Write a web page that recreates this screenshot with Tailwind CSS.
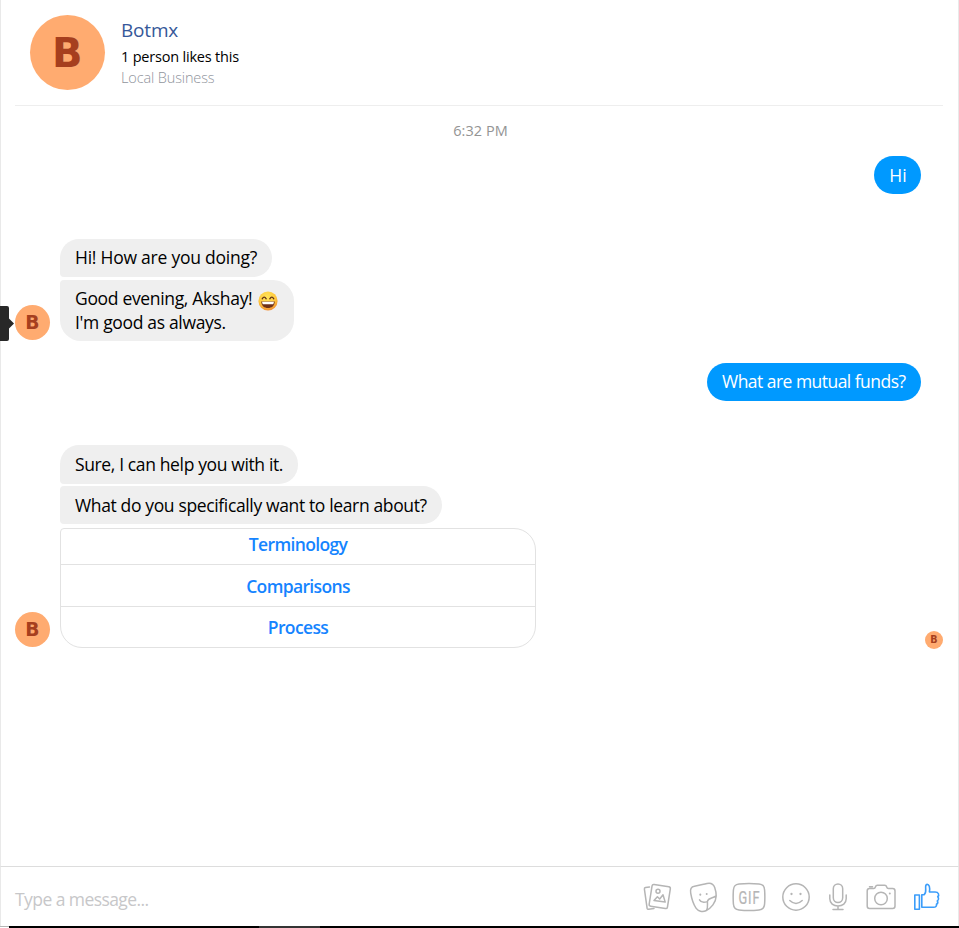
<!DOCTYPE html>
<html lang="en">
<head>
<meta charset="utf-8">
<title>Botmx</title>
<script src="https://cdn.jsdelivr.net/npm/@tailwindcss/browser@4"></script>
</head>
<body class="bg-white font-['Open_Sans',sans-serif] text-black">
<div class="relative flex h-[928px] w-[959px] flex-col overflow-hidden whitespace-nowrap">
  <main class="flex h-[866px] flex-col border-x border-[#e9e9e9] pr-[15px] pl-3.5">
    <header class="flex h-[106px] shrink-0 border-b border-[#eeeeee] pt-[15px] pl-[15px]">
      <div class="flex size-[75px] items-center justify-center rounded-full bg-[#ffab70]"><svg class="size-full" viewBox="0 0 75 75"><text x="22" y="52" textLength="30.500" lengthAdjust="spacingAndGlyphs" font-family="DejaVu Sans" font-weight="700" font-size="40.500" fill="#a63f1e">B</text></svg></div>
      <div class="ml-4 flex flex-col">
        <h1 class="mt-0.5 h-[27px] text-[19px] leading-[27px] font-[370] tracking-[-0.2px] text-[#365899]">Botmx</h1>
        <p class="h-[22px] text-[14.5px] leading-[26px] font-[370] tracking-[-0.2px]">1 person likes this</p>
        <p class="text-[14.5px] leading-[24px] font-[330] tracking-[-0.13px] text-[#90949c]">Local Business</p>
      </div>
    </header>
    <time class="mt-[14px] h-[21px] pl-[3px] text-center text-[14.5px] leading-[21px] tracking-[0.05px] text-[#949494]">6:32 PM</time>
    <section class="mt-[15px] mr-[22px] flex h-[38px] justify-end">
      <p class="h-[38px] w-[47px] rounded-full bg-[#0099ff] pl-px text-center text-[17.5px] leading-[38px] text-white">Hi</p>
    </section>
    <section class="mt-[45px] flex h-[102px] items-end">
      <div class="mb-px flex size-[35px] items-center justify-center rounded-full bg-[#ffab70]"><svg class="size-full" viewBox="0 0 75 75"><text x="22" y="52" textLength="30.500" lengthAdjust="spacingAndGlyphs" font-family="DejaVu Sans" font-weight="700" font-size="40.500" fill="#a63f1e">B</text></svg></div>
      <div class="ml-2.5 flex flex-col gap-[3px]">
        <p class="h-[38px] w-[212px] rounded-[19px] rounded-bl-[4px] bg-[#efefef] pl-[15px] text-[17.5px] leading-[37px] font-[370] tracking-[-0.24px]">Hi! How are you doing?</p>
        <div class="h-[61px] w-[234px] rounded-[21px] rounded-tl-[4px] bg-[#efefef] pt-[6px] pl-[15px] text-[17.5px] leading-6 font-[370] tracking-[-0.33px]">
          <div class="flex"><span class="w-[183px]">Good evening, Akshay!</span>
            <svg class="mt-[5px] size-5" viewBox="0 0 20 20"><defs><radialGradient id="face" cx="45%" cy="30%" r="75%"><stop stop-color="#ffe45a"/><stop offset=".6" stop-color="#ffc83d"/><stop offset="1" stop-color="#ee8130"/></radialGradient></defs><circle cx="10" cy="10" r="9.6" fill="url(#face)"/><path d="M4.2 7.8q2-3.2 4 0M11.8 7.8q2-3.2 4 0" fill="none" stroke="#603018" stroke-width="1.3" stroke-linecap="round"/><path d="M3.2 10.4h13.6c-.3 4.5-3 6.500-6.800 6.500s-6.500-2-6.800-6.500z" fill="#703018"/><path d="M4 10.700h12l-.7 2.500H4.700z" fill="#fff"/></svg></div>
          <div class="-mt-px">I'm good as always.</div>
        </div>
      </div>
    </section>
    <section class="mt-[22px] mr-[22px] flex h-[38px] justify-end">
      <p class="h-[38px] w-[214px] rounded-full bg-[#0099ff] pl-[15px] text-[17.5px] leading-[37px] font-[370] tracking-[-0.53px] text-white">What are mutual funds?</p>
    </section>
    <section class="mt-[44px] flex h-[203px] items-end">
      <div class="mb-px flex size-[35px] items-center justify-center rounded-full bg-[#ffab70]"><svg class="size-full" viewBox="0 0 75 75"><text x="22" y="52" textLength="30.500" lengthAdjust="spacingAndGlyphs" font-family="DejaVu Sans" font-weight="700" font-size="40.500" fill="#a63f1e">B</text></svg></div>
      <div class="ml-2.5 flex flex-col">
        <p class="h-[39px] w-[238px] rounded-[19px] rounded-bl-[4px] bg-[#efefef] pl-[15px] text-[17.5px] leading-[39px] font-[370] tracking-[-0.37px]">Sure, I can help you with it.</p>
        <p class="mt-0.5 h-[38px] w-[382px] rounded-r-[19px] rounded-l-[4px] bg-[#efefef] pl-[15px] text-[17.5px] leading-[38px] font-[370] tracking-[-0.36px]">What do you specifically want to learn about?</p>
        <div class="mt-1 h-[120px] w-[476px] rounded-[22px] rounded-tl-[4px] border border-[#e2e2e2] text-center text-[17.5px] font-[570] tracking-[-0.65px] text-[#1584ff]">
          <div class="h-9 border-b border-[#e2e2e2] leading-[31px]">Terminology</div>
          <div class="h-[42px] border-b border-[#e2e2e2] leading-[43px]">Comparisons</div>
          <div class="leading-[41px]">Process</div>
        </div>
      </div>
      <div class="-mb-px ml-auto flex size-[18px] items-center justify-center rounded-full bg-[#ffab70]"><svg class="size-full" viewBox="0 0 75 75"><text x="22" y="52" textLength="30.500" lengthAdjust="spacingAndGlyphs" font-family="DejaVu Sans" font-weight="700" font-size="40.500" fill="#a63f1e">B</text></svg></div>
    </section>
  </main>
  <footer class="flex h-[60px] border-x border-t border-[#dddddd] border-x-[#e9e9e9] pl-3.5">
    <div class="w-[628px] pt-[17px] text-[17.5px] leading-[30px] font-[370] tracking-[-0.57px] text-[#c7c7c9]">Type a message...</div>
    <svg class="h-[59px] w-[310px]" viewBox="643 867 310 59" fill="none" stroke="#b5b5b5" stroke-width="1.5" stroke-linecap="round" stroke-linejoin="round">
      <path d="M649.500 887l-4 .6q-1.300.3-1.100 1.600l2.700 19q.3 1.200 1.500 1l5.400-.8"/><rect x="650.500" y="885.500" width="18.500" height="22" rx="1.800" transform="rotate(9 659.750 896.500)"/><circle cx="658" cy="891.300" r="2"/><path d="M654 900.500l3.400-3.800 2.300 2.300 3.300-4.200 2.200 7.300z"/>
      <path d="M694.500 886.300c4.500-.6 8-1.900 12.500-2.900 4-.9 6.400.4 7.700 4 1 2.900 1.700 5.500 1.500 8.600-.3 6.500-5 12.300-10.300 14.700-3.400 1.500-7.800.6-9.900-2.500-2.200-3.300-4.400-9.700-5.300-15-.7-3.900.4-6.500 3.800-6.900zM716 896c-4 2.600-7.900 1.700-8.500 5.200-.4 3 .9 6.400-1.100 9.200M699.500 899.800c1.600 2.900 4.700 2.900 7.800 1.800"/><path d="M700.300 894.600v.1M706.700 893.900v.1" stroke-width="2"/>
      <path d="M739 884q10-1 20 0c4.200.5 5.300 2 5.600 6q.5 7 0 14c-.3 4-1.600 5.600-5.600 6q-10 1-20 0c-4-.4-5.300-2-5.600-6q-.5-7 0-14c.3-4 1.600-5.500 5.600-6z"/><text transform="translate(738.400 903.500) scale(.7 1)" letter-spacing="1.300" font-family="Roboto" font-size="18.300" fill="#b5b5b5" stroke="#b5b5b5" stroke-width=".25">GIF</text>
      <circle cx="796" cy="897" r="13.200"/><path d="M789.800 900.500q6.200 6 12.400 0"/><path d="M791.500 894v.1M800.500 894v.1" stroke-width="2.300"/>
      <rect x="833.300" y="884" width="9.400" height="18.500" rx="4.700"/><path d="M829.800 895v3.800c0 4.500 3.600 7.300 8.200 7.300s8.200-2.800 8.200-7.300V895M838 906.100v3.500M833 909.600h10"/>
      <path d="M869.500 888.500h4.200q1.300 0 1.700-1.500.5-1.700 2-1.700h7.300q1.500 0 2 1.700.4 1.500 1.700 1.500h4.300q2.300 0 2.300 2.500v15q0 2.500-2.300 2.500h-23.200q-2.300 0-2.300-2.500v-15q0-2.500 2.300-2.500zM869.500 886.700h3"/><circle cx="881" cy="898.500" r="6.300"/><path d="M889.800 893.500v.1" stroke-width="2"/>
      <g stroke="#3b9dfa" stroke-width="1.600"><rect x="914.800" y="895" width="4.600" height="14.200"/><path d="M921.800 907.300v-12.500h2.200c1.600-1.300 1.900-3.700 1.700-5.800-.2-2.600-.1-4.600 1.400-4.600 2 0 3.100 2.700 2.300 7.600h5.700c3.500 0 4.500 3 2.600 4.800 1.200 1.400 1.100 3-.4 4 .8 1.400.5 2.700-.8 3.500.3 1.800-.8 3-3 3z"/></g>
    </svg>
  </footer>
  <div class="flex h-0.5 bg-black"><span class="w-[9px] border-t border-[#b7b7b7] bg-white"></span><span class="ml-[250px] w-[61px] bg-[#343434]"></span></div>
  <svg class="absolute top-[306px] left-0 h-[35px] w-3.5" viewBox="0 0 14 35"><path d="M0 0h7q2 0 2 2v10.500l5 5-5 5V33q0 2-2 2H0z" fill="#282828"/></svg>
</div>
</body>
</html>
